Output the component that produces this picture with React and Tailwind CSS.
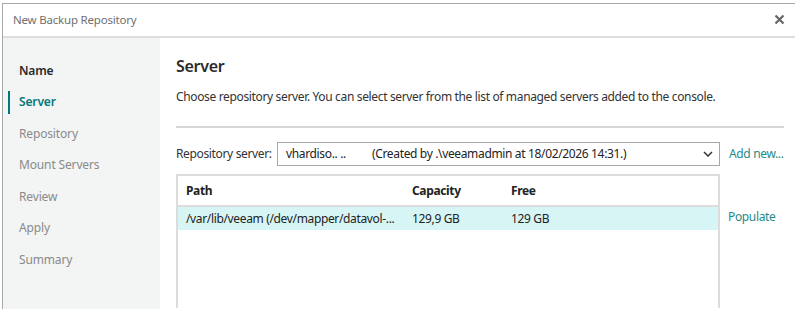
import React from 'react';

const steps = ['Name', 'Server', 'Repository', 'Mount Servers', 'Review', 'Apply', 'Summary'];

const App = () => {
    return (
        <div className="w-[800px] h-[319px] bg-white overflow-hidden" style={{ fontFamily: '"Noto Sans", "Open Sans", sans-serif' }}>
            <div className="ml-[2px] mt-[3px] w-[793px] h-[306px] border-l border-t border-[#a8a8a8] flex flex-col">
                {/* Title bar */}
                <div className="h-[34px] shrink-0 border-b-2 border-[#dedede] flex items-center justify-between pl-[10px] pr-[10px]">
                    <span className="text-[11.5px] tracking-[-0.2px] text-[#707070] whitespace-nowrap">New Backup Repository</span>
                    <svg width="11" height="11" viewBox="0 0 11 11" className="mt-[-1px]">
                        <path d="M1.5 1.5 L9.5 9.5 M9.5 1.5 L1.5 9.5" stroke="#666" strokeWidth="2.2" />
                    </svg>
                </div>

                <div className="flex flex-1">
                    {/* Steps */}
                    <div className="w-[157px] bg-[#f3f4f4] pt-[17px]">
                        {steps.map((step) => (
                            <div key={step} className="relative h-[31.5px] flex items-center pl-[16px]">
                                {step === 'Server' && (
                                    <span className="absolute left-[5px] top-[4px] bottom-[4px] w-[2px] bg-[#00787a]"></span>
                                )}
                                <span
                                    className={
                                        step === 'Name'
                                            ? 'text-[12px] tracking-[-0.15px] font-semibold text-[#2b2b2b] whitespace-nowrap'
                                            : step === 'Server'
                                            ? 'text-[12px] tracking-[-0.15px] font-semibold text-[#00787a] whitespace-nowrap'
                                            : 'text-[12px] tracking-[-0.15px] text-[#8a8a8a] whitespace-nowrap'
                                    }
                                >
                                    {step}
                                </span>
                            </div>
                        ))}
                    </div>

                    {/* Content */}
                    <div className="flex-1 pl-[16px] pr-[10px] text-[12px] tracking-[-0.35px] whitespace-nowrap">
                        <h1 className="mt-[17px] text-[16px] tracking-[-0.3px] font-semibold text-[#2b2b2b] leading-[22px]">Server</h1>
                        <p className="mt-[11px] text-[#333] leading-[18px]">
                            Choose repository server. You can select server from the list of managed servers added to the console.
                        </p>
                        <div className="mt-[20px] h-[2px] bg-[#d6d6d6] w-[608px]"></div>

                        <div className="mt-[14px] flex items-center">
                            <span className="text-[#333] w-[101px]">Repository server:</span>
                            <div className="w-[443px] h-[24px] border border-[#a8a8a8] flex items-center pl-[8px] pr-[6px] text-[#222]">
                                <span className="w-[86px]">vhardiso.. ..</span>
                                <span className="flex-1">(Created by .\veeamadmin at 18/02/2026 14:31.)</span>
                                <svg width="10" height="6" viewBox="0 0 10 6">
                                    <path d="M1 1 L5 5 L9 1" fill="none" stroke="#333" strokeWidth="1.5" />
                                </svg>
                            </div>
                            <span className="ml-[9px] text-[#1f8a8a]">Add new...</span>
                        </div>

                        <div className="mt-[8px] flex">
                            <div className="w-[544px] h-[134px] border-l-2 border-r-2 border-t-2 border-[#dcdcdc]">
                                <div className="h-[31px] border-b-2 border-[#dcdcdc] flex items-center font-bold text-[#222]">
                                    <span className="w-[234px] pl-[8px]">Path</span>
                                    <span className="w-[99px]">Capacity</span>
                                    <span>Free</span>
                                </div>
                                <div className="h-[23px] bg-[#d8f5f6] flex items-center text-[#222]">
                                    <span className="w-[234px] pl-[8px]">/var/lib/veeam (/dev/mapper/datavol-...</span>
                                    <span className="w-[99px]">129,9 GB</span>
                                    <span>129 GB</span>
                                </div>
                            </div>
                            <div className="ml-[8px] pt-[31px]">
                                <span className="text-[#1f8a8a] leading-[23px]">Populate</span>
                            </div>
                        </div>
                    </div>
                </div>
            </div>
        </div>
    );
};

export default App;
